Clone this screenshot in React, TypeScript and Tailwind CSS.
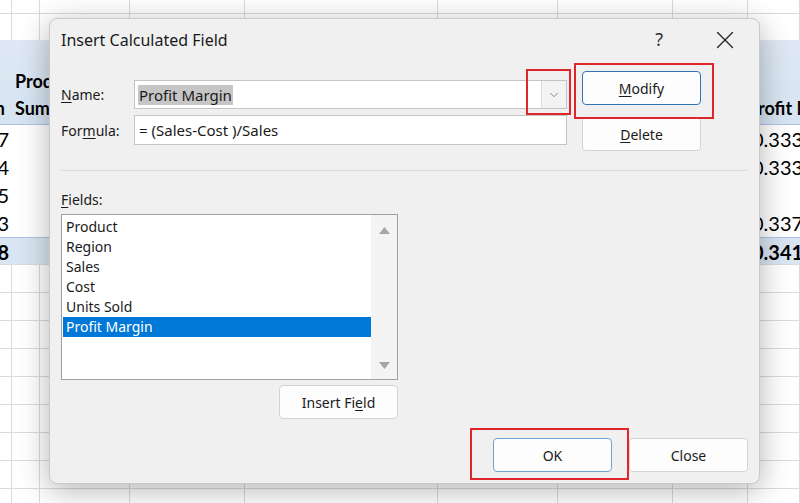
import { X, ChevronDown } from "lucide-react";

const gridCols = "grid grid-cols-[12px_28px_90px_115px_193px_120px_115px_75px_52px]";

function PlainRow({ className }: { className: string }) {
    return (
        <div className={`${gridCols} shrink-0 border-b border-[#dadada] ${className}`}>
            {Array.from({ length: 9 }).map((_, i) => (
                <div key={i} className="border-r border-[#dadada]" />
            ))}
        </div>
    );
}

const dataRows = [
    { left: "7", right: "0.333" },
    { left: "4", right: "0.333" },
    { left: "5", right: "" },
    { left: "3", right: "0.337" },
];

function Sheet() {
    return (
        <div className="flex flex-col w-[800px] h-[503px] overflow-hidden bg-white text-[20px] text-black font-['Lato',sans-serif]">
            <PlainRow className="h-[14px]" />
            <PlainRow className="h-[26px] border-b-0" />
            {/* pivot header */}
            <div className={`${gridCols} shrink-0 h-[85px] bg-linear-to-b from-[#dfe9f5] to-[#d6e3f1] border-b border-[#a9c4e2] font-bold text-[18px] leading-[27px]`}>
                <div className="flex flex-col justify-end items-end overflow-hidden whitespace-nowrap pr-[7px] pb-[2px]">
                    <span>Region</span>
                </div>
                <div className="col-span-6 flex flex-col justify-end overflow-hidden whitespace-nowrap pl-[3px] pb-[2px]">
                    <span>Product</span>
                    <span>Sum of Sales</span>
                </div>
                <div />
                <div className="flex flex-col justify-end overflow-visible whitespace-nowrap pb-[2px]">
                    <span className="-ml-[1px]">Profit Margin</span>
                </div>
            </div>
            {dataRows.map((r, i) => (
                <div key={i} className={`${gridCols} shrink-0 h-[28px] items-center leading-[28px]`}>
                    <div className="flex justify-end pr-[3px]">{r.left}</div>
                    <div className="col-span-7" />
                    <div className="pl-[4px] whitespace-nowrap overflow-hidden">{r.right}</div>
                </div>
            ))}
            <div className={`${gridCols} shrink-0 h-[28px] items-center leading-[28px] font-bold bg-[#d9e5f2] border-t border-[#a9c4e2] border-b border-b-[#dadada]`}>
                <div className="flex justify-end pr-[3px]">8</div>
                <div className="col-span-7" />
                <div className="pl-[4px] whitespace-nowrap overflow-hidden">0.341</div>
            </div>
            {Array.from({ length: 9 }).map((_, i) => (
                <PlainRow key={i} className="h-[28px]" />
            ))}
        </div>
    );
}

function Btn({
    children,
    className = "",
}: {
    children: React.ReactNode;
    className?: string;
}) {
    return (
        <div
            className={`flex items-center justify-center w-[119px] h-[34px] rounded-[4px] border bg-[#fdfdfd] ${className}`}
        >
            {children}
        </div>
    );
}

function TriangleUp() {
    return (
        <svg width="11" height="7" viewBox="0 0 11 7">
            <polygon points="5.5,0 11,7 0,7" fill="#a6a6a6" />
        </svg>
    );
}

function TriangleDown() {
    return (
        <svg width="11" height="7" viewBox="0 0 11 7">
            <polygon points="0,0 11,0 5.5,7" fill="#a6a6a6" />
        </svg>
    );
}

function Dialog() {
    const fields = ["Product", "Region", "Sales", "Cost", "Units Sold", "Profit Margin"];
    return (
        <div className="absolute left-[49px] top-[18px] w-[711px] h-[466px] rounded-[8px] border border-[#c9c9c9] bg-[#f0f0f0] shadow-[0_6px_30px_rgba(0,0,0,0.3)] flex flex-col font-['Noto_Sans',sans-serif] text-[14px] text-[#1a1a1a]">
            {/* Title bar */}
            <div className="flex items-center h-[41px] pl-[11px] pr-[19px] shrink-0">
                <span className="text-[16px]">Insert Calculated Field</span>
                <span className="ml-auto text-[18px] text-[#333] mr-[47px]">?</span>
                <X className="w-[30px] h-[30px] text-[#222]" strokeWidth={1} />
            </div>

            {/* Name / Formula + Modify / Delete */}
            <div className="flex pl-[11px] pt-[11px] shrink-0">
                <div className="flex flex-col w-[506px]">
                    <div className="flex items-center mt-[9px]">
                        <span className="w-[73px]">
                            <u className="underline-offset-2">N</u>ame:
                        </span>
                        <div className="flex items-center w-[433px] h-[29px] bg-white border border-[#c4c4c4]">
                            <span className="ml-[3px] px-[1px] bg-[#c6c6c6] text-[15px] leading-[20px]">Profit Margin</span>
                            <div className="ml-auto flex items-center justify-center w-[25px] h-[27px] bg-[#f3f3f3] border-l border-[#dcdcdc]">
                                <ChevronDown className="w-[14px] h-[14px] text-[#6a6a6a]" strokeWidth={1.3} />
                            </div>
                        </div>
                    </div>
                    <div className="flex items-center mt-[6px]">
                        <span className="w-[73px]">
                            For<u className="underline-offset-2">m</u>ula:
                        </span>
                        <div className="flex items-center w-[433px] h-[30px] bg-white border border-[#c4c4c4] pl-[4px] text-[15px]">
                            = (Sales-Cost )/Sales
                        </div>
                    </div>
                </div>
                <div className="flex flex-col gap-[12px] ml-[15px]">
                    <Btn className="border-[#2f73b8]">
                        <span>
                            <u className="underline-offset-2">M</u>odify
                        </span>
                    </Btn>
                    <Btn className="border-[#d3d3d3]">
                        <span>
                            <u className="underline-offset-2">D</u>elete
                        </span>
                    </Btn>
                </div>
            </div>

            {/* separator */}
            <div className="mt-[19px] ml-[11px] mr-[11px] h-px bg-[#dcdcdc] shrink-0" />

            {/* Fields */}
            <div className="flex flex-col w-[348px] pl-[11px] shrink-0">
                <span className="mt-[19px] leading-[20px]">
                    <u className="underline-offset-2">F</u>ields:
                </span>
                <div className="mt-[4px] h-[166px] flex bg-white border border-[#a0a0a0]">
                    <div className="flex-1 pt-[2px] pl-[1px] leading-[20px]">
                        {fields.map((f) => (
                            <div
                                key={f}
                                className={`pl-[3px] h-[20px] ${
                                    f === "Profit Margin" ? "bg-[#0078d7] text-white" : ""
                                }`}
                            >
                                {f}
                            </div>
                        ))}
                    </div>
                    <div className="w-[26px] bg-[#f4f4f4] flex flex-col items-center justify-between pt-[12px] pb-[10px]">
                        <TriangleUp />
                        <TriangleDown />
                    </div>
                </div>
                <Btn className="self-end mt-[5px] h-[33px] border-[#d3d3d3]">
                    <span>
                        Insert Fi<u className="underline-offset-2">e</u>ld
                    </span>
                </Btn>
            </div>

            {/* OK / Close */}
            <div className="flex justify-end gap-[17px] pr-[11px] mt-[19px] shrink-0">
                <Btn className="bg-[#dfecf8] border-[#6fa3d2]">OK</Btn>
                <Btn className="w-[117px] border-[#d3d3d3]">Close</Btn>
            </div>
        </div>
    );
}

export default function App() {
    return (
        <div className="relative w-[800px] h-[503px] overflow-hidden">
            <Sheet />
            <Dialog />
            {/* annotation boxes */}
            <div className="absolute left-[526px] top-[69px] w-[45px] h-[46px] border-2 border-[#e0252b]" />
            <div className="absolute left-[574px] top-[63px] w-[140px] h-[56px] border-2 border-[#e0252b]" />
            <div className="absolute left-[470px] top-[428px] w-[159px] h-[52px] border-2 border-[#e0252b]" />
        </div>
    );
}
